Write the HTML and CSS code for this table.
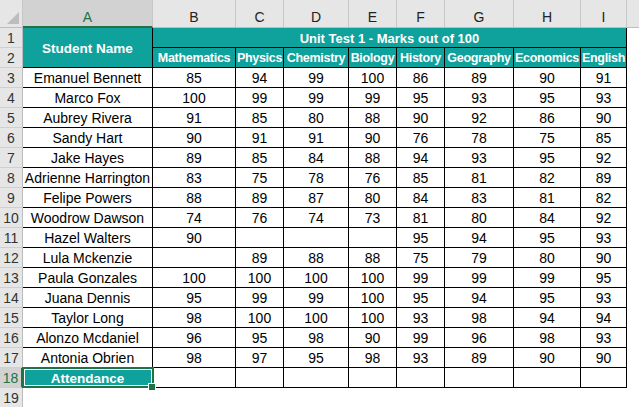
FILE: index.html
```html
<!DOCTYPE html>
<html>
<head>
<meta charset="utf-8">
<link rel="stylesheet" href="styles.css">
</head>
<body>
<div class="sheet">
  <div class="corner"><span class="tri"></span></div>
  <div class="colh sel">A</div>
  <div class="colh">B</div>
  <div class="colh">C</div>
  <div class="colh">D</div>
  <div class="colh">E</div>
  <div class="colh">F</div>
  <div class="colh">G</div>
  <div class="colh">H</div>
  <div class="colh">I</div>
  <div class="colh last"></div>

  <div class="rowh">1</div>
  <div class="hd name">Student Name</div>
  <div class="hd title">Unit Test 1 - Marks out of 100</div>
  <div class="blank"></div>

  <div class="rowh">2</div>
  <div class="hd subj">Mathematics</div>
  <div class="hd subj">Physics</div>
  <div class="hd subj">Chemistry</div>
  <div class="hd subj">Biology</div>
  <div class="hd subj">History</div>
  <div class="hd subj">Geography</div>
  <div class="hd subj">Economics</div>
  <div class="hd subj">English</div>
  <div class="blank"></div>

  <div class="rowh">3</div><div class="c">Emanuel Bennett</div><div class="c">85</div><div class="c">94</div><div class="c">99</div><div class="c">100</div><div class="c">86</div><div class="c">89</div><div class="c">90</div><div class="c">91</div><div class="blank"></div>
  <div class="rowh">4</div><div class="c">Marco Fox</div><div class="c">100</div><div class="c">99</div><div class="c">99</div><div class="c">99</div><div class="c">95</div><div class="c">93</div><div class="c">95</div><div class="c">93</div><div class="blank"></div>
  <div class="rowh">5</div><div class="c">Aubrey Rivera</div><div class="c">91</div><div class="c">85</div><div class="c">80</div><div class="c">88</div><div class="c">90</div><div class="c">92</div><div class="c">86</div><div class="c">90</div><div class="blank"></div>
  <div class="rowh">6</div><div class="c">Sandy Hart</div><div class="c">90</div><div class="c">91</div><div class="c">91</div><div class="c">90</div><div class="c">76</div><div class="c">78</div><div class="c">75</div><div class="c">85</div><div class="blank"></div>
  <div class="rowh">7</div><div class="c">Jake Hayes</div><div class="c">89</div><div class="c">85</div><div class="c">84</div><div class="c">88</div><div class="c">94</div><div class="c">93</div><div class="c">95</div><div class="c">92</div><div class="blank"></div>
  <div class="rowh">8</div><div class="c">Adrienne Harrington</div><div class="c">83</div><div class="c">75</div><div class="c">78</div><div class="c">76</div><div class="c">85</div><div class="c">81</div><div class="c">82</div><div class="c">89</div><div class="blank"></div>
  <div class="rowh">9</div><div class="c">Felipe Powers</div><div class="c">88</div><div class="c">89</div><div class="c">87</div><div class="c">80</div><div class="c">84</div><div class="c">83</div><div class="c">81</div><div class="c">82</div><div class="blank"></div>
  <div class="rowh">10</div><div class="c">Woodrow Dawson</div><div class="c">74</div><div class="c">76</div><div class="c">74</div><div class="c">73</div><div class="c">81</div><div class="c">80</div><div class="c">84</div><div class="c">92</div><div class="blank"></div>
  <div class="rowh">11</div><div class="c">Hazel Walters</div><div class="c">90</div><div class="c"></div><div class="c"></div><div class="c"></div><div class="c">95</div><div class="c">94</div><div class="c">95</div><div class="c">93</div><div class="blank"></div>
  <div class="rowh">12</div><div class="c">Lula Mckenzie</div><div class="c"></div><div class="c">89</div><div class="c">88</div><div class="c">88</div><div class="c">75</div><div class="c">79</div><div class="c">80</div><div class="c">90</div><div class="blank"></div>
  <div class="rowh">13</div><div class="c">Paula Gonzales</div><div class="c">100</div><div class="c">100</div><div class="c">100</div><div class="c">100</div><div class="c">99</div><div class="c">99</div><div class="c">99</div><div class="c">95</div><div class="blank"></div>
  <div class="rowh">14</div><div class="c">Juana Dennis</div><div class="c">95</div><div class="c">99</div><div class="c">99</div><div class="c">100</div><div class="c">95</div><div class="c">94</div><div class="c">95</div><div class="c">93</div><div class="blank"></div>
  <div class="rowh">15</div><div class="c">Taylor Long</div><div class="c">98</div><div class="c">100</div><div class="c">100</div><div class="c">100</div><div class="c">93</div><div class="c">98</div><div class="c">94</div><div class="c">94</div><div class="blank"></div>
  <div class="rowh">16</div><div class="c">Alonzo Mcdaniel</div><div class="c">96</div><div class="c">95</div><div class="c">98</div><div class="c">90</div><div class="c">99</div><div class="c">96</div><div class="c">98</div><div class="c">93</div><div class="blank"></div>
  <div class="rowh">17</div><div class="c">Antonia Obrien</div><div class="c">98</div><div class="c">97</div><div class="c">95</div><div class="c">98</div><div class="c">93</div><div class="c">89</div><div class="c">90</div><div class="c">90</div><div class="blank"></div>
  <div class="rowh selr">18</div><div class="hd active">Attendance</div><div class="c"></div><div class="c"></div><div class="c"></div><div class="c"></div><div class="c"></div><div class="c"></div><div class="c"></div><div class="c"></div><div class="blank"></div>
  <div class="rowh">19</div><div class="empty"></div>
</div>
</body>
</html>
```

FILE: styles.css
```css
html, body {
  margin: 0;
  padding: 0;
  background: #ffffff;
}
.sheet {
  display: grid;
  grid-template-columns: 23px 130px 83px 48px 65px 48px 48px 69px 67px 46px 12px;
  grid-template-rows: 28px repeat(19, 20px);
  width: 639px;
  height: 407px;
  overflow: hidden;
  font-family: "Liberation Sans", Arial, sans-serif;
  font-size: 14px;
  color: #000;
}
.sheet > div {
  box-sizing: border-box;
  display: flex;
  align-items: center;
  justify-content: center;
  white-space: nowrap;
  overflow: hidden;
}
.corner {
  background: #e6e6e6;
  border-right: 1px solid #c6c6c6;
  border-bottom: 1px solid #bdbdbd;
  position: relative;
}
.tri {
  position: absolute;
  right: 3px;
  bottom: 3px;
  width: 0;
  height: 0;
  border-left: 12px solid transparent;
  border-bottom: 12px solid #bdbdbd;
}
.colh {
  background: #e6e6e6;
  border-right: 1px solid #c6c6c6;
  border-bottom: 1px solid #bdbdbd;
  color: #222;
  font-size: 14px;
  padding-top: 7px;
}
.colh.sel {
  background: #d2d2d2;
  color: #217346;
  border-bottom: 2px solid #217346;
}
.colh.last {
  border-right: none;
}
.rowh {
  background: #e6e6e6;
  border-right: 1px solid #bdbdbd;
  border-bottom: 1px solid #cfcfcf;
  color: #333;
  font-size: 14px;
  padding-top: 1px;
}
.rowh.selr {
  background: #d2d2d2;
  color: #217346;
  border-right: 2px solid #217346;
}
.hd {
  background: #0fa19c;
  color: #ffffff;
  font-weight: bold;
  font-size: 13px;
  border-right: 1px solid #000;
  border-bottom: 1px solid #000;
  padding-top: 1px;
}
.hd.subj {
  font-size: 12.5px;
  letter-spacing: -0.3px;
}
.hd.name {
  grid-row: span 2;
  font-size: 13.5px;
}
.hd.title {
  grid-column: span 8;
}
.c {
  border-right: 1px solid #000;
  border-bottom: 1px solid #000;
  padding-top: 1px;
}
.blank {
  background: #fff;
}
.empty {
  grid-column: span 10;
}
.hd.active {
  position: relative;
  overflow: visible !important;
  font-size: 13.5px;
}
.hd.active::after {
  content: "";
  position: absolute;
  left: -1px;
  top: -1px;
  right: -2px;
  bottom: -1px;
  border: 2px solid #217346;
  box-shadow: inset 0 0 0 1px #ffffff;
}
.hd.active::before {
  content: "";
  position: absolute;
  right: -4px;
  bottom: -4px;
  width: 6px;
  height: 6px;
  background: #217346;
  border: 1px solid #ffffff;
  z-index: 2;
}
```
